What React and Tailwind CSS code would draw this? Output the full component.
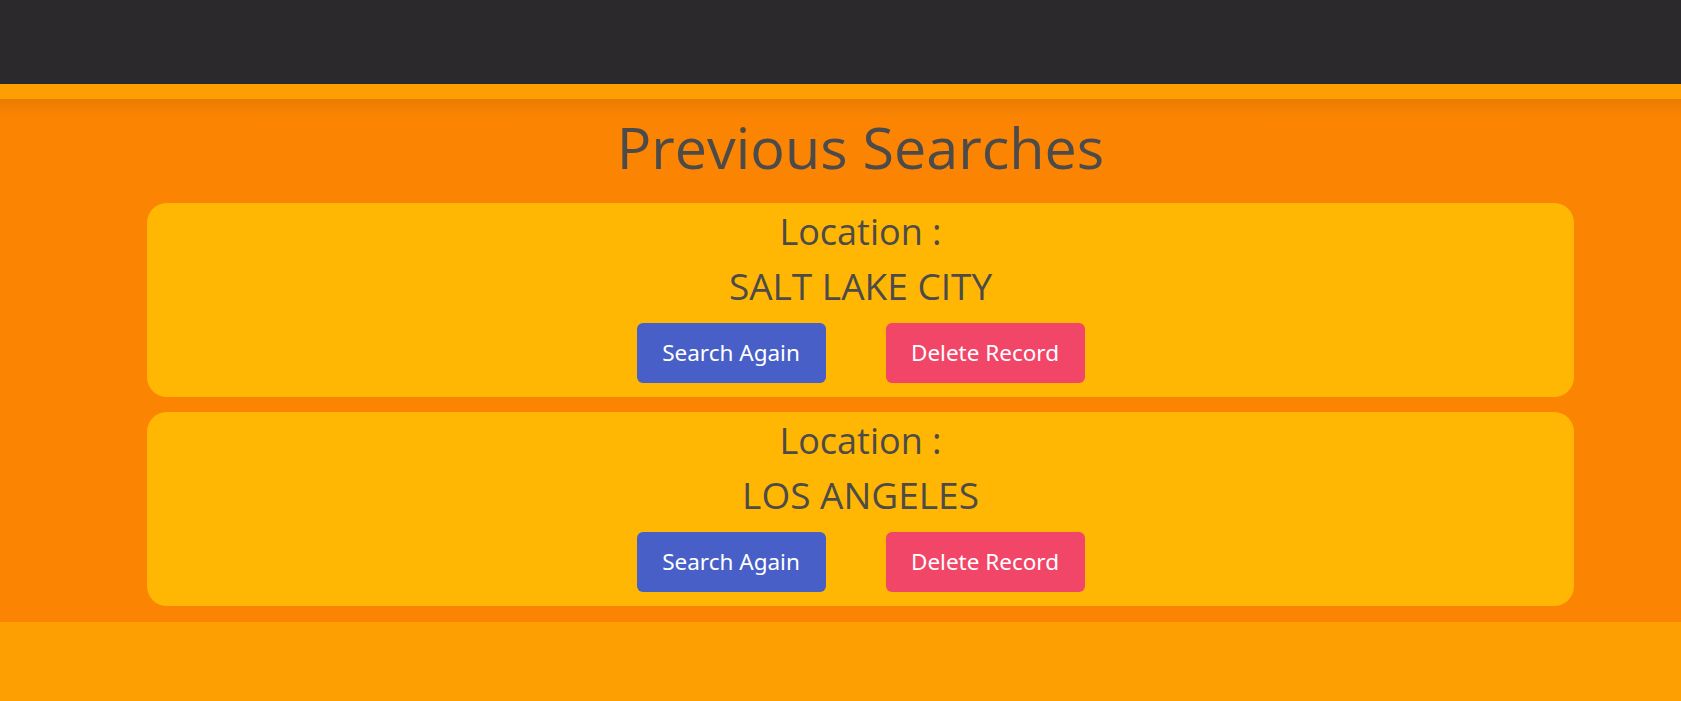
import React from "react";

const records = ["SALT LAKE CITY", "LOS ANGELES"];

function Card({ city }) {
  return (
    <div className="flex h-[194px] flex-col items-center rounded-[20px] bg-[#ffb703] text-[#4d4b4a]">
      <div className="mt-[3px] h-[52px] text-[36px] leading-[52px] [font-family:'Open_Sans',sans-serif]">
        Location :
      </div>
      <div className="h-[56px] text-[37px] leading-[56px] [font-family:'Open_Sans',sans-serif]">
        {city}
      </div>
      <div className="mt-[9px] flex gap-[60px] [font-family:'Noto_Sans',sans-serif]">
        <button className="h-[60px] w-[189px] rounded-[6px] bg-[#485fc7] text-[22.5px] text-white">
          Search Again
        </button>
        <button className="h-[60px] w-[199px] rounded-[6px] bg-[#f14668] text-[22.5px] text-white">
          Delete Record
        </button>
      </div>
    </div>
  );
}

export default function App() {
  return (
    <div className="min-h-[701px] bg-[#fd9e02]">
      <header className="h-[84px] bg-[#2b292c]" />
      <div className="h-[15px] bg-[#fd9e02]" />
      <section className="bg-[linear-gradient(to_bottom,#ea7b02,#fb8503_18px)] pb-[16px]">
        <div className="ml-[147px] w-[1427px]">
          <h1 className="h-[104px] pt-[7px] text-center text-[57.5px] leading-[82px] text-[#4d4b4a] [font-family:'Open_Sans',sans-serif]">
            Previous Searches
          </h1>
          <div className="flex flex-col gap-[15px]">
            {records.map((c) => (
              <Card key={c} city={c} />
            ))}
          </div>
        </div>
      </section>
    </div>
  );
}
